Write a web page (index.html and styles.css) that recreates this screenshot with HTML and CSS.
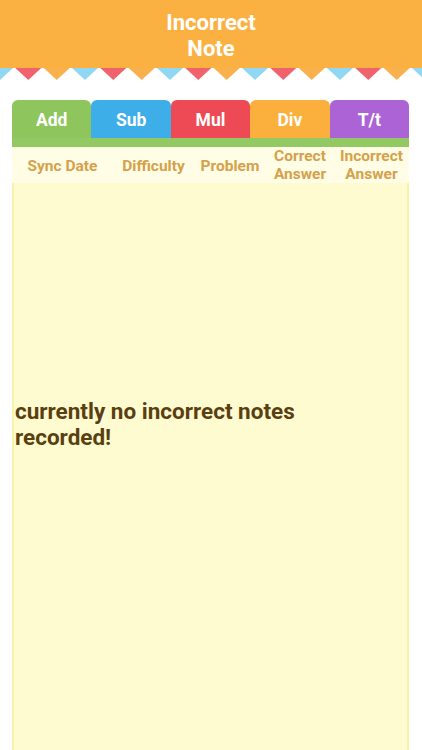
FILE: index.html
```html
<!DOCTYPE html>
<html>
<head>
<meta charset="utf-8">
<link rel="stylesheet" href="styles.css">
</head>
<body>
<div class="app">
  <header class="topbar">
    <h1 class="title">Incorrect<br>Note</h1>
  </header>
  <svg class="bunting" width="422" height="14" viewBox="0 0 422 14">
    <polygon points="-13,0 13,0 0,12" fill="#8fd7f2"/>
    <polygon points="15.3,0 41.3,0 28.3,12" fill="#f0636c"/>
    <polygon points="43.7,0 69.7,0 56.7,12" fill="#f8b14c"/>
    <polygon points="72,0 98,0 85,12" fill="#8fd7f2"/>
    <polygon points="100.3,0 126.3,0 113.3,12" fill="#f0636c"/>
    <polygon points="128.7,0 154.7,0 141.7,12" fill="#f8b14c"/>
    <polygon points="157,0 183,0 170,12" fill="#8fd7f2"/>
    <polygon points="185.3,0 211.3,0 198.3,12" fill="#f0636c"/>
    <polygon points="213.7,0 239.7,0 226.7,12" fill="#f8b14c"/>
    <polygon points="242,0 268,0 255,12" fill="#8fd7f2"/>
    <polygon points="270.3,0 296.3,0 283.3,12" fill="#f0636c"/>
    <polygon points="298.7,0 324.7,0 311.7,12" fill="#f8b14c"/>
    <polygon points="327,0 353,0 340,12" fill="#8fd7f2"/>
    <polygon points="355.3,0 381.3,0 368.3,12" fill="#f0636c"/>
    <polygon points="383.7,0 409.7,0 396.7,12" fill="#f8b14c"/>
    <polygon points="412,0 438,0 425,12" fill="#8fd7f2"/>
  </svg>
  <main class="content">
    <nav class="tabs">
      <div class="tab tab-add">Add</div>
      <div class="tab tab-sub">Sub</div>
      <div class="tab tab-mul">Mul</div>
      <div class="tab tab-div">Div</div>
      <div class="tab tab-tt">T/t</div>
    </nav>
    <div class="tabline"></div>
    <div class="cols">
      <div class="col">Sync Date</div>
      <div class="col">Difficulty</div>
      <div class="col">Problem</div>
      <div class="col col-two">Correct<br>Answer</div>
      <div class="col col-two">Incorrect<br>Answer</div>
    </div>
    <section class="list">
      <p class="empty">currently no incorrect notes recorded!</p>
    </section>
  </main>
</div>
</body>
</html>
```

FILE: styles.css
```css
* { box-sizing: border-box; }
html, body {
  margin: 0;
  padding: 0;
  background: #ffffff;
  font-family: Roboto, "Liberation Sans", Arial, sans-serif;
}
.app {
  width: 422px;
  height: 750px;
  display: flex;
  flex-direction: column;
  overflow: hidden;
}
.topbar {
  height: 68px;
  background: #fbb141;
  display: flex;
  align-items: center;
  justify-content: center;
  padding-top: 3px;
  flex-shrink: 0;
}
.title {
  margin: 0;
  color: #ffffff;
  font-size: 22px;
  font-weight: 700;
  line-height: 26px;
  text-align: center;
}
.bunting {
  display: block;
  flex-shrink: 0;
}
.content {
  flex: 1;
  display: flex;
  flex-direction: column;
  margin: 18px 13px 0 12px;
  min-height: 0;
}
.tabs {
  display: grid;
  grid-template-columns: repeat(5, 1fr);
  height: 38px;
  flex-shrink: 0;
}
.tab {
  border-radius: 6px 6px 0 0;
  color: #ffffff;
  font-size: 17.5px;
  font-weight: 700;
  display: flex;
  align-items: center;
  justify-content: center;
  padding-top: 2px;
}
.tab-add { background: #8ec55c; }
.tab-sub { background: #3eaee8; }
.tab-mul { background: #ee4a55; }
.tab-div { background: #fbaf3c; }
.tab-tt  { background: #ac63d6; }
.tabline {
  height: 9px;
  background: #93c963;
  flex-shrink: 0;
}
.cols {
  display: grid;
  grid-template-columns: 101px 81px 72px 68px 75px;
  height: 36px;
  background: #fffde6;
  flex-shrink: 0;
}
.col {
  color: #d5a14a;
  font-size: 15.5px;
  font-weight: 700;
  text-align: center;
  display: flex;
  align-items: center;
  justify-content: center;
  line-height: 18px;
  white-space: nowrap;
  padding-top: 1px;
}
.col-two {
  align-items: flex-start;
  padding-top: 0;
}
.list {
  flex: 1;
  background: #fffbd1;
  border-left: 2px solid #f8f3a6;
  border-right: 2px solid #f8f3a6;
  padding: 215px 70px 0 1px;
}
.empty {
  margin: 0;
  color: #5a3f10;
  font-size: 22.5px;
  font-weight: 700;
  line-height: 26px;
}
```
